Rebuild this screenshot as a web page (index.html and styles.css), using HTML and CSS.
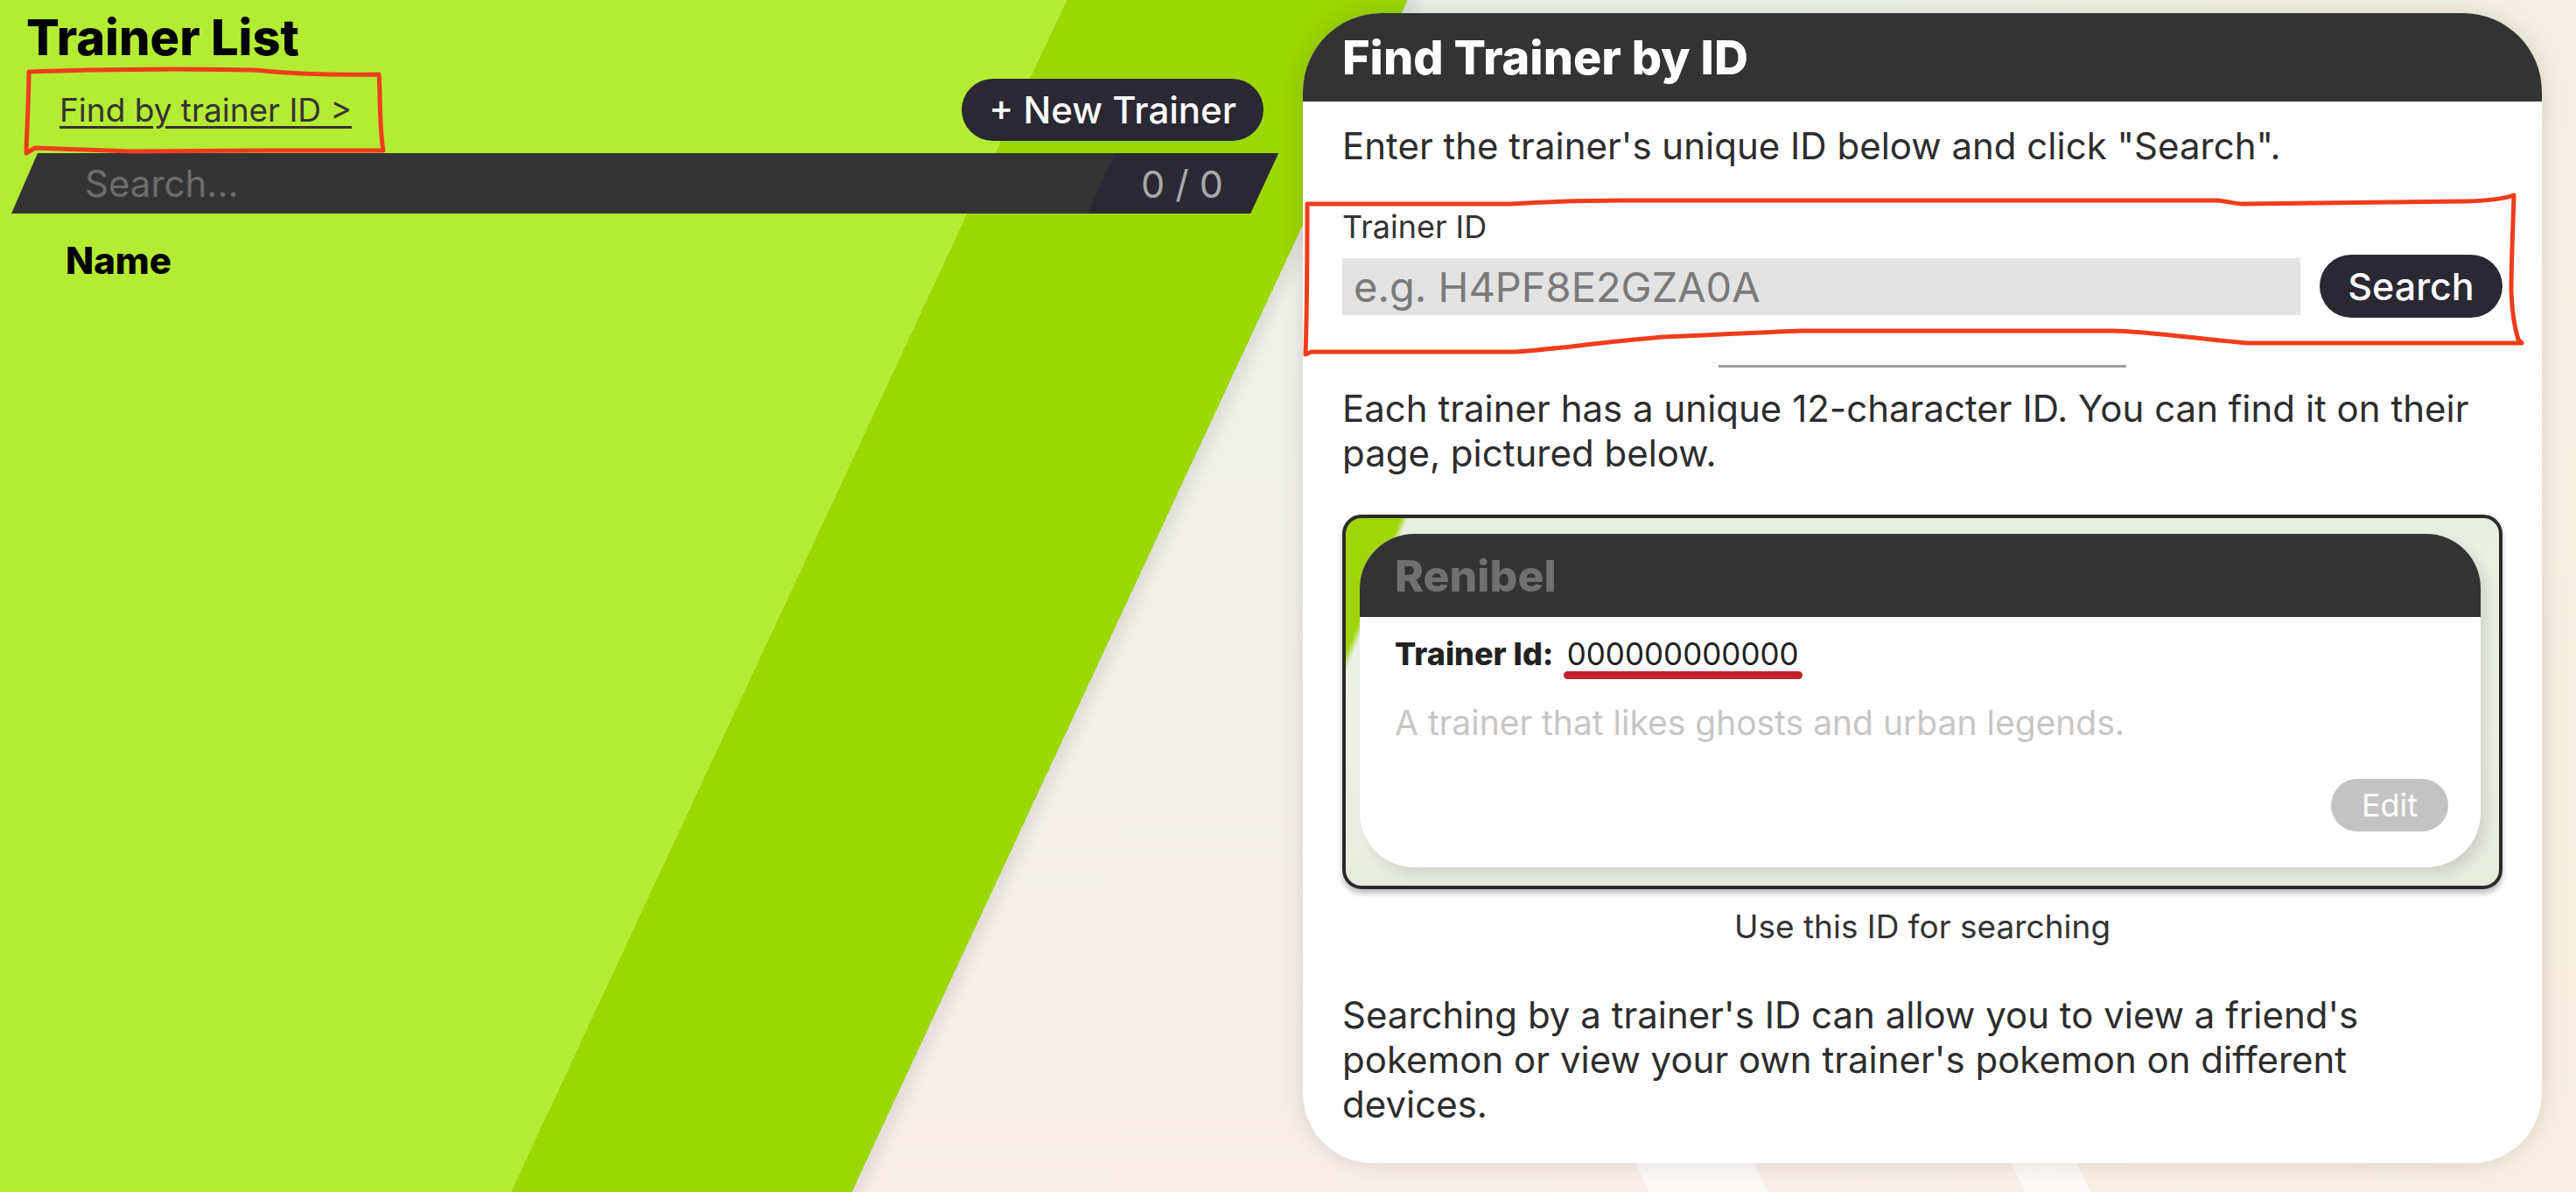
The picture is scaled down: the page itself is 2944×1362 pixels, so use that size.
FILE: index.html
```html
<!DOCTYPE html>
<html lang="en">
<head>
<meta charset="utf-8">
<title>Trainer List</title>
<link rel="stylesheet" href="styles.css">
</head>
<body>
<div class="page">
  <section class="list-panel">
    <h1 class="list-title">Trainer List</h1>
    <div class="toolbar">
      <a class="find-link" href="#">Find by trainer ID &gt;</a>
      <button class="btn-new">+ New Trainer</button>
    </div>
    <div class="searchbar">
      <span class="search-placeholder">Search...</span>
      <span class="search-count">0 / 0</span>
    </div>
    <div class="table-head">Name</div>
  </section>

  <section class="find-card">
    <header class="find-head"><h2>Find Trainer by ID</h2></header>
    <div class="find-body">
      <p class="intro">Enter the trainer's unique ID below and click "Search".</p>
      <label class="field-label" for="tid">Trainer ID</label>
      <div class="field-row">
        <input class="id-input" id="tid" type="text" placeholder="e.g. H4PF8E2GZA0A">
        <button class="btn-search">Search</button>
      </div>
      <hr class="divider">
      <p class="para">Each trainer has a unique 12-character ID. You can find it on their page, pictured below.</p>
      <div class="preview">
        <div class="mini-card">
          <div class="mini-head">Renibel</div>
          <div class="mini-body">
            <div class="mini-id"><b class="mini-id-label">Trainer Id:</b> <span class="mini-id-value">000000000000<span class="mark"></span></span></div>
            <p class="mini-desc">A trainer that likes ghosts and urban legends.</p>
            <div class="mini-actions"><span class="mini-edit">Edit</span></div>
          </div>
        </div>
      </div>
      <p class="caption">Use this ID for searching</p>
      <p class="para para-last">Searching by a trainer's ID can allow you to view a friend's pokemon or view your own trainer's pokemon on different devices.</p>
    </div>
  </section>

  <svg class="annotations" width="2944" height="1362" viewBox="0 0 2944 1362" aria-hidden="true">
    <path d="M33 82 C60 81 80 81 100 80 L200 79 L290 80 C330 84 380 86 433 85 C435 110 433 140 438 172 L300 172 L150 173 L40 169 L30 175 C31 140 33 110 33 82 Z"/>
    <path d="M1494 233 L1727 233 C1780 230 1820 229 1853 229 L2535 229 C2550 231 2556 233 2563 233 L2820 230 C2850 229 2865 226 2873 223 C2872 260 2870 300 2870 333 C2871 360 2874 375 2878 388 L2882 392 L2568 392 C2520 388 2450 378 2414 378 L2059 378 C2000 380 1950 383 1900 385 C1820 392 1770 400 1732 402 L1499 402 L1492 405 C1494 350 1494 290 1494 233 Z"/>
  </svg>
</div>
</body>
</html>
```

FILE: styles.css
```css
* {
  box-sizing: border-box;
  margin: 0;
  padding: 0;
}

html, body {
  width: 2944px;
  height: 1362px;
  overflow: hidden;
}

body {
  font-family: Inter, "Noto Sans", "Liberation Sans", sans-serif;
  color: #2d2d2d;
}

.page {
  position: relative;
  display: flex;
  align-items: flex-start;
  width: 2944px;
  height: 1362px;
  background:
    linear-gradient(115deg, #b4ec34 0 1105px, #9bd700 1105px 1458px, rgba(0,0,0,0.08) 1458px, rgba(0,0,0,0) 1480px),
    linear-gradient(65deg, rgba(255,255,255,0) 258px, rgba(255,255,255,0.7) 258px 381px, rgba(255,255,255,0) 381px 647px, rgba(255,255,255,0.7) 647px 715px, rgba(255,255,255,0) 715px) 1600px 900px / 1344px 462px no-repeat,
    linear-gradient(90deg, rgba(247,240,222,0) 70%, rgba(247,240,222,0.8) 100%),
    linear-gradient(180deg, #edf2ea 0%, #f2f0ea 50%, #f8eeeb 100%);
}

/* ---------- left list panel ---------- */
.list-panel {
  flex: none;
  width: 1489px;
  padding: 15px 45px 0 30px;
}

.list-title {
  font-size: 56px;
  line-height: 56px;
  font-weight: 800;
  color: #000;
}

.toolbar {
  display: flex;
  justify-content: space-between;
  align-items: center;
  margin-top: 19px;
}

.find-link {
  margin-left: 38px;
  font-size: 37px;
  line-height: 44px;
  color: #333;
  text-decoration: underline;
  text-decoration-thickness: 3px;
  text-underline-offset: 5px;
}

.btn-new {
  height: 71px;
  padding: 0 31px;
  border: 0;
  border-radius: 36px;
  background: #2a2833;
  color: #fff;
  font-family: inherit;
  font-size: 42px;
  font-weight: 500;
}

.searchbar {
  display: flex;
  align-items: center;
  height: 69px;
  margin: 14px -17px 0 -17px;
  background: #333;
  clip-path: polygon(30px 0, 100% 0, calc(100% - 32px) 100%, 0 100%);
}

.search-placeholder {
  padding-left: 84px;
  font-size: 42px;
  color: #6c6c6c;
}

.search-count {
  display: flex;
  align-items: center;
  justify-content: flex-end;
  width: 218px;
  height: 100%;
  margin-left: auto;
  padding-right: 63px;
  background: #2a2833;
  clip-path: polygon(31px 0, 100% 0, 100% 100%, 0 100%);
  font-size: 43px;
  color: #a9a9a9;
}

.table-head {
  margin: 30px 0 0 45px;
  font-size: 42px;
  line-height: 48px;
  font-weight: 800;
  color: #000;
}

/* ---------- right find card ---------- */
.find-card {
  flex: none;
  width: 1416px;
  margin-top: 15px;
  background: #fff;
  border-radius: 90px 90px 80px 80px;
  overflow: hidden;
  box-shadow: 0 0 28px rgba(0, 0, 0, 0.13);
}

.find-head {
  display: flex;
  align-items: center;
  height: 101px;
  padding-left: 45px;
  background: #333;
}

.find-head h2 {
  font-size: 54px;
  line-height: 54px;
  font-weight: 800;
  color: #fff;
}

.find-body {
  padding: 25px 45px 42px;
}

.intro {
  font-size: 42px;
  line-height: 51px;
}

.field-label {
  display: block;
  margin-top: 47px;
  font-size: 36px;
  line-height: 40px;
  color: #333;
}

.field-row {
  display: flex;
  align-items: center;
  gap: 22px;
  height: 72px;
  margin-top: 12px;
}

.id-input {
  flex: 1;
  min-width: 0;
  height: 65px;
  padding-left: 13px;
  border: 0;
  outline: none;
  background: #e3e3e3;
  font-family: inherit;
  font-size: 47px;
  color: #333;
}

.id-input::placeholder {
  color: #7a7a7a;
}

.btn-search {
  flex: none;
  width: 209px;
  height: 72px;
  border: 0;
  border-radius: 36px;
  background: #2a2833;
  color: #fff;
  font-family: inherit;
  font-size: 43px;
  font-weight: 500;
}

.divider {
  width: 466px;
  height: 3px;
  margin: 54px auto 0;
  border: 0;
  background: #9c9c9c;
}

.para {
  margin-top: 21px;
  font-size: 42px;
  line-height: 51px;
}

.para-last {
  max-width: 1300px;
  margin-top: 53px;
}

/* preview picture */
.preview {
  height: 428px;
  margin-top: 45px;
  padding: 18px 21px 21px 16px;
  border: 4px solid #2b2b2b;
  border-radius: 22px;
  background:
    linear-gradient(112deg, #9fd60a 0 58px, rgba(159,214,10,0) 66px),
    linear-gradient(180deg, #e8efe2 0%, #eef0e8 60%, #e7ebdf 100%);
  box-shadow: 0 5px 6px rgba(0, 0, 0, 0.25);
}

.mini-card {
  display: flex;
  flex-direction: column;
  height: 381px;
  background: #fff;
  border-radius: 62px;
  overflow: hidden;
  box-shadow: 8px 8px 14px rgba(0, 0, 0, 0.1);
}

.mini-head {
  display: flex;
  align-items: center;
  flex: none;
  height: 95px;
  padding-left: 40px;
  background: #333;
  font-size: 50px;
  line-height: 50px;
  font-weight: 800;
  color: #707070;
}

.mini-body {
  display: flex;
  flex-direction: column;
  flex: 1;
  padding: 22px 37px 41px 40px;
}

.mini-id {
  font-size: 36px;
  line-height: 40px;
  color: #222;
}

.mini-id-label {
  font-weight: 800;
  margin-right: 5px;
}

.mini-id-value {
  display: inline-block;
  font-size: 35px;
}

.mark {
  display: block;
  height: 9px;
  margin: 0 -4px;
  border-radius: 5px;
  background: #c1202e;
}

.mini-desc {
  margin-top: 28px;
  font-size: 39px;
  line-height: 44px;
  color: #c6c6c6;
}

.mini-actions {
  display: flex;
  justify-content: flex-end;
  margin-top: auto;
}

.mini-edit {
  display: flex;
  align-items: center;
  justify-content: center;
  width: 134px;
  height: 60px;
  border-radius: 30px;
  background: #c3c3c3;
  color: #fff;
  font-size: 36px;
}

.caption {
  margin-top: 21px;
  text-align: center;
  font-size: 37px;
  line-height: 44px;
  color: #333;
}

/* hand-drawn annotation marks */
.annotations {
  position: absolute;
  left: 0;
  top: 0;
  pointer-events: none;
}

.annotations path {
  fill: none;
  stroke: #f03c1c;
  stroke-width: 5;
  stroke-linejoin: round;
  stroke-linecap: round;
}
```
